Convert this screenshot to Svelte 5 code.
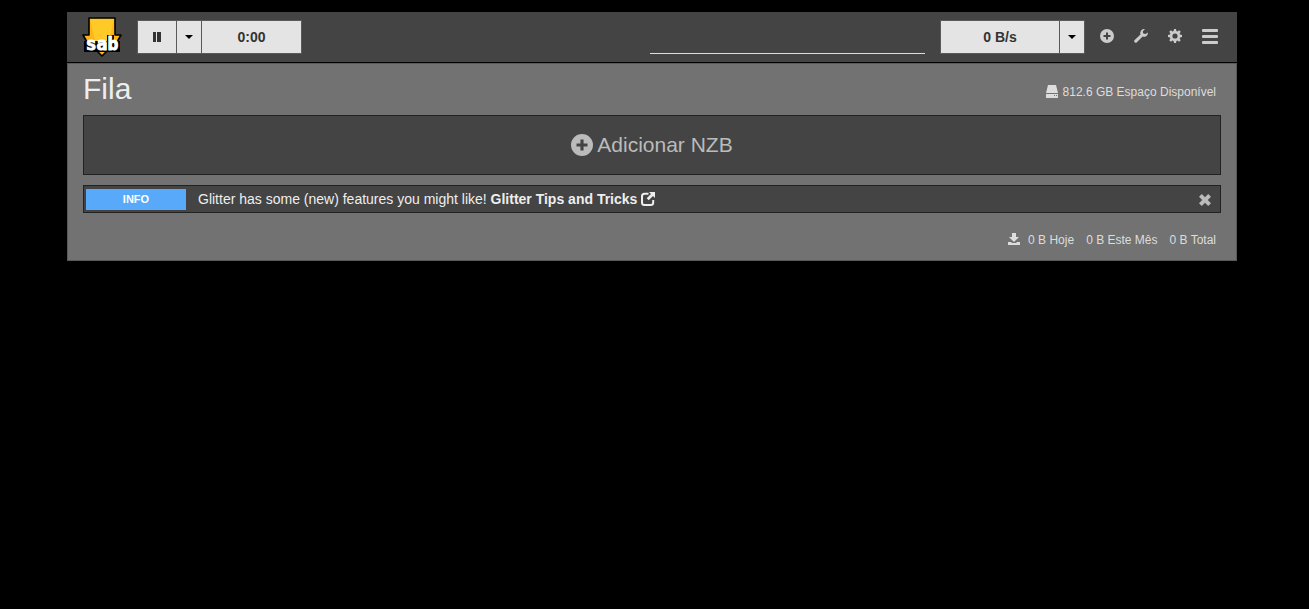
<script>
    let { timeLeft = '0:00', speed = '0 B/s', freeSpace = '812.6 GB' } = $props();

    let showMessage = $state(true);

    const totals = [
        { amount: '0 B', label: 'Hoje' },
        { amount: '0 B', label: 'Este Mês' },
        { amount: '0 B', label: 'Total' }
    ];
</script>

{#snippet plusSign()}
    <svg class="icon" viewBox="0 0 14 14" aria-hidden="true">
        <path fill-rule="evenodd" d="M7 0a7 7 0 1 1 0 14A7 7 0 0 1 7 0zM6 3.500V6H3.500v2H6v2.500h2V8h2.500V6H8V3.500z" />
    </svg>
{/snippet}

<main class="container">
    <nav class="navbar">
        <a class="logo" href="./" aria-label="SABnzbd">
            <svg viewBox="0 0 40 40">
                <path d="M7 1h26v17h6l-4 7v9H25l-5 5-5-5H5v-9l-4-7h6z" fill="#ffb515" stroke="#000" stroke-width="1.6" stroke-linejoin="round" />
                <path d="M8 2h24l-5 22H13z" fill="#ffca28" />
                <path d="M2 24h23v-6h7v6h6v11H2z" />
                <text x="20" y="33" text-anchor="middle">sab</text>
            </svg>
        </a>

        <div class="group">
            <button class="pause" aria-label="Pausar">
                <svg class="icon" viewBox="0 0 14 14"><path d="M3 2h3v10H3zM7 2h4v10H7z" /></svg>
            </button>
            <button class="toggle" aria-label="Opções de pausa"><span class="caret"></span></button>
            <button class="time">{timeLeft}</button>
        </div>

        <div class="sparkline"></div>

        <div class="group">
            <button class="speed">{speed}</button>
            <button class="toggle" aria-label="Limite de velocidade"><span class="caret"></span></button>
        </div>

        <div class="links">
            <a href="#add" aria-label="Adicionar NZB">{@render plusSign()}</a>
            <a href="#status" aria-label="Estado">
                <svg class="icon" viewBox="0 0 14 14">
                    <path d="M13.9 3.4a4 4 0 0 1-5.3 4.2l-5.700 5.700a1.500 1.500 0 0 1-2.200-2.200l5.800-5.700A4 4 0 0 1 11 .1L8.700 2.400l.5 2.100 2.300.5z" />
                </svg>
            </a>
            <a href="#config" aria-label="Configuração">
                <svg class="icon" viewBox="0 0 14 14">
                    <path fill-rule="evenodd" d="M6 0h2l.4 1.900 1.100.5L11.200 1.300l1.500 1.500-1.100 1.700.5 1.100L14 6v2l-1.900.4-.5 1.100 1.100 1.700-1.500 1.500-1.700-1.100-1.100.5L8 14H6l-.4-1.900-1.100-.5-1.700 1.100-1.500-1.500 1.100-1.700-.5-1.100L0 8V6l1.900-.4.5-1.100L1.300 2.800l1.500-1.500 1.700 1.100 1.100-.5zM7 4.400a2.600 2.600 0 1 0 0 5.200 2.600 2.600 0 0 0 0-5.200z" />
                </svg>
            </a>
            <button class="menu" aria-label="Menu">
                <span></span>
                <span></span>
                <span></span>
            </button>
        </div>
    </nav>

    <section class="queue">
        <header>
            <h2>Fila</h2>
            <div class="space">
                <svg class="icon" viewBox="0 0 14 14" aria-hidden="true">
                    <path fill-rule="evenodd" d="M3 0h8l2 8H1zM1 9h12v4H1zM9 10v1h1v-1zM11 10v1h1v-1z" />
                </svg>
                <span>{freeSpace} Espaço Disponível</span>
            </div>
        </header>

        <button class="add">{@render plusSign()}<span>Adicionar NZB</span></button>

        {#if showMessage}
            <div class="message">
                <span class="label">INFO</span>
                <p>
                    Glitter has some (new) features you might like!
                    <a href="#tips">Glitter Tips and Tricks
                        <svg class="icon" viewBox="0 0 14 14" aria-hidden="true">
                            <path d="M7.500 1.800H3.500Q1 1.800 1 4.300v6.200Q1 13 3.500 13h6.200q2.500 0 2.500-2.500V8" fill="none" stroke="currentColor" stroke-width="2" />
                            <path d="M8 0h6v6l-2-2-4.300 4.300-2-2L10 2z" />
                        </svg></a>
                </p>
                <button class="close" aria-label="Fechar" onclick={() => (showMessage = false)}>
                    <svg class="icon" viewBox="0 0 14 14">
                        <path d="M3.800 1 7 4.200 10.200 1 13 3.800 9.800 7l3.200 3.200-2.800 2.800L7 9.800 3.800 13 1 10.200 4.200 7 1 3.800z" />
                    </svg>
                </button>
            </div>
        {/if}

        <footer>
            <svg class="icon" viewBox="0 0 14 14" aria-hidden="true">
                <path d="M5 0h4v4h3L7 9 2 4h3zM1 9h3l1 1h4l1-1h3v3H1z" />
            </svg>
            {#each totals as total}
                <span>{total.amount} {total.label}</span>
            {/each}
        </footer>
    </section>
</main>

<style>
    :global(body) {
        background: #000;
        color: #eee;
        font-family: "Liberation Sans", Arial, sans-serif;
        font-size: 14px;
        line-height: 20px;
        padding: 12px 5px 0 0;
    }
    .container, .container * {
        box-sizing: border-box;
    }
    .container {
        margin: 0 auto;
        max-width: 1170px;
    }
    .icon {
        display: block;
        fill: currentColor;
        flex: none;
        height: 14px;
        width: 14px;
    }
    a {
        color: inherit;
        text-decoration: none;
    }
    button {
        border: 0;
        cursor: pointer;
        font: inherit;
        padding: 0;
    }
    .navbar {
        align-items: center;
        background: #444;
        border-bottom: 1px solid #000;
        display: flex;
        padding: 5px 15px;
    }
    .logo svg {
        display: block;
        height: 40px;
        margin-right: 15px;
        width: 40px;
    }
    .logo text {
        fill: #fff;
        font-family: "DejaVu Sans Mono", monospace;
        font-size: 18px;
        font-weight: bold;
        stroke: #fff;
        stroke-width: 1px;
    }
    .group {
        background: #5a5a5a;
        border: 1px solid #5a5a5a;
        display: flex;
        gap: 1px;
    }
    .group button {
        align-items: center;
        background: #e4e4e4;
        color: #333;
        display: flex;
        font-weight: bold;
        height: 32px;
        justify-content: center;
    }
    .group .pause {
        width: 38px;
    }
    .group .toggle {
        width: 24px;
    }
    .group .time {
        width: 99px;
    }
    .group .speed {
        width: 118px;
    }
    .caret {
        border: 4px solid transparent;
        border-bottom: 0;
        border-top-color: #000;
    }
    .sparkline {
        border-bottom: 1px solid #ddd;
        height: 34px;
        margin: 0 15px 0 auto;
        width: 275px;
    }
    .links {
        align-items: center;
        color: #ccc;
        display: flex;
        gap: 20px;
        margin: 0 4px 2px 15px;
    }
    .menu {
        background: none;
        display: grid;
        gap: 3px;
        width: 16px;
    }
    .menu span {
        background: #ccc;
        border-radius: 1px;
        height: 3px;
    }
    .queue {
        background: #727272;
        border: 1px solid #5a5a5a;
        padding: 8px 15px 10px;
    }
    header {
        align-items: center;
        display: flex;
        justify-content: space-between;
        margin-bottom: 9px;
    }
    h2 {
        font-size: 30px;
        font-weight: normal;
        line-height: 34px;
        margin: 0;
    }
    .space, footer {
        align-items: center;
        color: #ddd;
        display: flex;
        font-size: 12px;
    }
    .space {
        gap: 4px;
        margin: 5px 5px 0 0;
    }
    .add {
        align-items: center;
        background: #444;
        border: 1px solid #222;
        color: #bbb;
        display: flex;
        font-size: 21px;
        gap: 4px;
        height: 60px;
        justify-content: center;
        width: 100%;
    }
    .add .icon {
        height: 22px;
        width: 22px;
    }
    .message {
        align-items: center;
        background: #444;
        border: 1px solid #222;
        display: flex;
        margin-top: 10px;
        padding: 3px 2px 2px;
    }
    .label {
        background: #58a9fa;
        color: #fff;
        font-size: 11px;
        font-weight: bold;
        line-height: 21px;
        text-align: center;
        width: 100px;
    }
    p {
        flex: 1;
        line-height: 18px;
        margin: 0 12px 2px;
    }
    p a {
        font-weight: bold;
    }
    p .icon {
        display: inline-block;
        vertical-align: -2px;
    }
    .close {
        background: none;
        color: #bbb;
        margin-right: 6px;
    }
    footer {
        gap: 12px;
        justify-content: flex-end;
        margin: 17px 5px 0 0;
    }
    footer .icon {
        margin-right: -5px;
    }
</style>
